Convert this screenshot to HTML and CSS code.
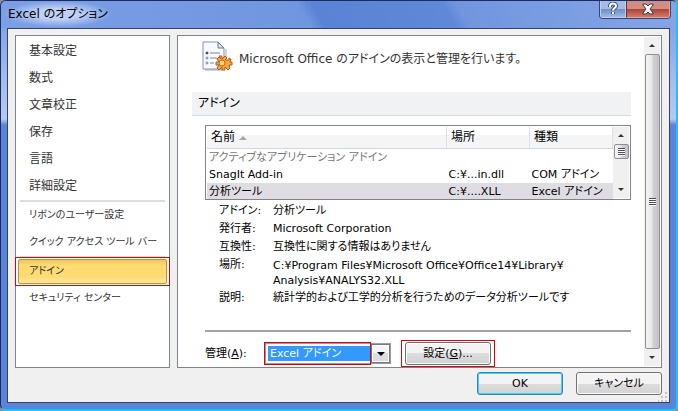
FILE: index.html
```html
<!DOCTYPE html>
<html lang="ja">
<head>
    <meta charset="UTF-8">
    <meta name="viewport" content="width=device-width, initial-scale=1.0">
    <title>Excel のオプション</title>
    <link rel="stylesheet" href="styles.css">
</head>
<body>
    <div class="window">
        <header class="titlebar">
            <h1 class="title">Excel のオプション</h1>
            <div class="caption-buttons">
                <button type="button" class="caption help" aria-label="ヘルプ">
                    <svg width="12" height="14" viewBox="0 0 12 14">
                        <path d="M3 5V4a3 2.500 0 0 1 6 0c0 2-3 2-3 4.500M6 10v2" fill="none" stroke="#3b4a75" stroke-width="4"/>
                        <path d="M3 5V4a3 2.500 0 0 1 6 0c0 2-3 2-3 4.500M6 10v2" fill="none" stroke="#ffffff" stroke-width="2"/>
                    </svg>
                </button>
                <button type="button" class="caption close" aria-label="閉じる">
                    <svg width="14" height="12" viewBox="0 0 14 12">
                        <path d="M2 1h3l2 2 2-2h3v1L9 6l3 4v1H9L7 9l-2 2H2v-1l3-4-3-4z" fill="#ffffff" stroke="#4a3550"/>
                    </svg>
                </button>
            </div>
        </header>

        <div class="client">
            <div class="panels">
                <!-- カテゴリ一覧 -->
                <nav class="sidebar">
                    <div class="main-items">
                        <a class="item" href="#">基本設定</a>
                        <a class="item" href="#">数式</a>
                        <a class="item" href="#">文章校正</a>
                        <a class="item" href="#">保存</a>
                        <a class="item" href="#">言語</a>
                        <a class="item" href="#">詳細設定</a>
                    </div>
                    <div class="separator"></div>
                    <a class="item" href="#">リボンのユーザー設定</a>
                    <a class="item" href="#">クイック アクセス ツール バー</a>
                    <div class="separator"></div>
                    <div class="selected marked"><a class="item active" href="#">アドイン</a></div>
                    <a class="item" href="#">セキュリティ センター</a>
                </nav>

                <main class="content">
                    <div class="page">
                        <div class="intro">
                            <svg width="32" height="32" viewBox="0 0 32 32">
                                <path d="M3 29h17M24 8v10" stroke="#d4d4d8" stroke-width="2"/>
                                <path d="M1 1h15l6 6v21H1z" fill="#f7faff" stroke="#8294b5"/>
                                <path d="M16 1v6h6z" fill="#dbe6f5" stroke="#6d7890"/>
                                <path d="M8 12h10M8 17h7M8 22h4" stroke="#7e879b"/>
                                <circle cx="5" cy="12" r="1" fill="#444444" stroke="#444444"/>
                                <circle cx="5" cy="17" r="1" fill="#ffffff" stroke="#5f80c0"/>
                                <circle cx="5" cy="22" r="1" fill="#ffffff" stroke="#5f80c0"/>
                                <path d="M17 15h3v3l3-3 2 2-2 2h4v-2l2 1-1 3h2v3h-3l1 3-2 2-3-3v3h-3v-3l-3 3-2-2 2-3h-3v-3h3l-2-3 2-2 2 2z" fill="#f5a63c" stroke="#b85b1d" stroke-linejoin="round"/>
                                <circle cx="20" cy="22" r="3" fill="#ffd877" stroke="#c16a20"/>
                            </svg>
                            <p class="intro-text">Microsoft Office のアドインの表示と管理を行います。</p>
                        </div>

                        <h2 class="section-title">アドイン</h2>

                        <div class="section">
                            <div class="list">
                                <table class="addins">
                                    <thead>
                                        <tr><th class="name">名前 <span class="sort"></span></th><th class="place">場所</th><th class="type">種類</th></tr>
                                    </thead>
                                    <tbody>
                                        <tr class="group"><td colspan="3">アクティブなアプリケーション アドイン</td></tr>
                                        <tr><td>SnagIt Add-in</td><td>C:¥...in.dll</td><td>COM アドイン</td></tr>
                                        <tr class="current"><td>分析ツール</td><td>C:¥....XLL</td><td>Excel アドイン</td></tr>
                                    </tbody>
                                </table>
                                <div class="scrollbar small">
                                    <span class="arrow up"></span>
                                    <span class="thumb"><span class="grip"></span></span>
                                    <span class="arrow down"></span>
                                </div>
                            </div>

                            <dl class="details">
                                <dt>アドイン:</dt><dd>分析ツール</dd>
                                <dt>発行者:</dt><dd>Microsoft Corporation</dd>
                                <dt>互換性:</dt><dd>互換性に関する情報はありません</dd>
                                <dt>場所:</dt><dd class="path">C:¥Program Files¥Microsoft Office¥Office14¥Library¥<br>Analysis¥ANALYS32.XLL</dd>
                                <dt>説明:</dt><dd>統計学的および工学的分析を行うためのデータ分析ツールです</dd>
                            </dl>

                            <div class="manage">
                                <label for="manage">管理(<u>A</u>):</label>
                                <div class="combo">
                                    <select id="manage">
                                        <option>Excel アドイン</option>
                                    </select>
                                    <span class="drop"></span>
                                </div>
                                <div class="go marked"><button type="button" class="button">設定(<u>G</u>)...</button></div>
                            </div>
                        </div>
                    </div>
                    <div class="scrollbar">
                        <span class="arrow up"></span>
                        <span class="thumb"><span class="grip"></span></span>
                        <span class="arrow down"></span>
                    </div>
                </main>
            </div>

            <footer class="footer">
                <button type="button" class="button default">OK</button>
                <button type="button" class="button">キャンセル</button>
                <svg class="resize" width="10" height="10" viewBox="0 0 10 10">
                    <path d="M7 0h2v2h-2zM7 4h2v2h-2zM7 8h2v2h-2zM3 4h2v2h-2zM3 8h2v2h-2zM0 8h1v2h-1z" fill="#c2c2c8"/>
                </svg>
            </footer>
        </div>
    </div>
</body>
</html>
```

FILE: styles.css
```css
* {
    box-sizing: border-box;
}
body {
    margin: 0;
    background: #8b8f9c;
    color: #000000;
    font-family: "DejaVu Sans", "Noto Sans CJK JP", sans-serif;
    font-size: 11px;
    line-height: 18px;
    font-feature-settings: "palt";
}
h1, h2, p, dl, dd {
    margin: 0;
    font-weight: normal;
}
button, select {
    font: inherit;
    font-feature-settings: inherit;
    color: inherit;
}

/* ウィンドウ枠 */
.window {
    display: flex;
    flex-direction: column;
    min-height: 100vh;
    padding: 0 6px 6px;
    border: 1px solid #1c2c5c;
    border-right: 2px solid #16c6f4;
    border-bottom: 2px solid #16c6f4;
    border-radius: 6px;
    background: linear-gradient(#7398e2 0, #a4bdec 80px, #b5caf0 118px, #5b84d8 124px, #5b84d8 100%);
}
.titlebar {
    display: flex;
    justify-content: space-between;
    align-items: flex-start;
    height: 27px;
    margin: 0 -6px;
    padding: 0 5px 0 3px;
    border-radius: 5px 5px 0 0;
    background: linear-gradient(60deg, #7c9fe5 0%, #7096e0 45%, #5b83d5 47%, #5f88d8 66%, #7196df 68%, #86a5e5 100%);
}
.title {
    padding: 4px;
    border-radius: 8px;
    background: radial-gradient(closest-side, #bfd1f5 40%, transparent);
    font-size: 12px;
}
.caption-buttons {
    display: flex;
    border: 1px solid #35457c;
    border-top: 0;
    border-radius: 0 0 4px 4px;
    overflow: hidden;
}
.caption {
    display: flex;
    align-items: center;
    justify-content: center;
    height: 17px;
    padding: 0;
    border: 1px solid #c0cdec;
    border-top: 0;
}
.help {
    width: 26px;
    background: linear-gradient(#a6bbe3 50%, #6f8cc4 50%, #9bb8e6);
}
.close {
    width: 44px;
    border-color: #e0a79e;
    border-left: 1px solid #6d2c38;
    background: linear-gradient(#cf8d84 50%, #ad4034 50%, #d07a66);
}

.client {
    display: flex;
    flex: 1;
    flex-direction: column;
    padding: 6px 7px 7px;
    border: 1px solid #34406c;
    background: #f0f0f0;
}
.panels {
    display: flex;
    flex: 1;
    gap: 7px;
}

/* サイドメニュー */
.sidebar {
    flex: 0 0 155px;
    min-width: 0;
    padding-top: 2px;
    border: 1px solid #7f838f;
    background: #ffffff;
    font-size: 10px;
}
.main-items {
    font-size: 12px;
}
.item {
    display: block;
    padding: 4px 13px 5px;
    color: #333333;
    text-decoration: none;
    white-space: nowrap;
}
.separator {
    height: 2px;
    margin: 0 4px;
    background: #dcdde1;
}
.marked {
    outline: 1px solid #e00000;
}
.selected {
    padding: 1px 2px;
}
.active {
    padding: 2px 10px 3px;
    border: 1px solid #bd9139;
    border-radius: 2px;
    background: linear-gradient(#f5c45e, #ffdb72 25%, #ffdb72 70%, #ffe89a);
}

/* 右側の内容 */
.content {
    display: flex;
    flex: 1;
    min-width: 0;
    padding: 1px;
    border: 1px solid #7f838f;
    background: #ffffff;
}
.page {
    flex: 1;
    min-width: 0;
    padding: 4px 13px 0;
}
.intro {
    display: flex;
    gap: 5px;
    padding-left: 10px;
}
.intro-text {
    padding-top: 9px;
    color: #333333;
    font-size: 12px;
}
.section-title {
    margin-top: 19px;
    padding: 2px 6px 3px;
    border-bottom: 1px solid #d9dbdf;
    background: #f1f2f4;
    font-size: 12px;
}
.section {
    padding: 9px 0 0 13px;
}
.list {
    display: flex;
    height: 75px;
    padding: 1px;
    border: 1px solid #7f838f;
    overflow: hidden;
}
.addins {
    flex: 1;
    border-collapse: collapse;
    table-layout: fixed;
    height: 72px;
}
.addins th {
    height: 21px;
    padding: 0 4px;
    border-right: 1px solid #dcdfe4;
    border-bottom: 1px solid #d5d5d5;
    background: linear-gradient(#ffffff 40%, #f3f5f7 40%);
    font-size: 12px;
    font-weight: normal;
    line-height: 18px;
    text-align: left;
}
.addins td {
    height: 17px;
    padding: 0 2px;
    line-height: 17px;
    white-space: nowrap;
}
.place, .type {
    width: 83px;
}
.group {
    color: #777777;
}
.current {
    background: #dfdde3;
}
.sort {
    display: inline-block;
    vertical-align: middle;
    border: 4px solid transparent;
    border-top: 0;
    border-bottom-color: #a5a9ae;
}

/* スクロールバー */
.scrollbar {
    display: flex;
    flex: 0 0 16px;
    flex-direction: column;
    align-items: center;
    background: #f0f0f1;
}
.arrow {
    display: flex;
    align-items: center;
    justify-content: center;
    height: 17px;
}
.arrow::before {
    content: "";
    border: 3px solid transparent;
}
.up::before {
    border-top: 0;
    border-bottom-color: #333333;
}
.down::before {
    border-bottom: 0;
    border-top-color: #333333;
}
.thumb {
    display: flex;
    flex: 1;
    align-items: center;
    justify-content: center;
    width: 15px;
    border: 1px solid #8e9095;
    border-radius: 2px;
    background: linear-gradient(90deg, #f5f5f5, #e7e7e8 45%, #cfd0d2 55%, #c2c3c7);
}
.grip {
    width: 7px;
    height: 8px;
    background: repeating-linear-gradient(#4c4f58 0, #4c4f58 1px, #ffffff 1px, #ffffff 2px);
}
.small .thumb {
    flex: 0 0 15px;
}
.small .down {
    margin-top: auto;
}

.details {
    display: grid;
    grid-template-columns: 54px 1fr;
    padding: 2px 0 0 14px;
}
.path {
    padding: 2px 0 1px;
    line-height: 15px;
}
.manage {
    display: flex;
    align-items: center;
    margin-top: 23px;
    padding-top: 9px;
    border-top: 2px solid #a0a2a7;
}
.manage label {
    width: 59px;
}
.combo {
    position: relative;
    width: 128px;
    height: 23px;
    padding: 1px;
}
.combo::after {
    content: "";
    position: absolute;
    inset: 0 21px 0 0;
    border: 1px solid #e00000;
    pointer-events: none;
}
.combo select {
    display: block;
    width: 100%;
    height: 21px;
    padding: 0 24px 0 4px;
    border: 1px solid #9a9ca0;
    border-radius: 0;
    outline: 0;
    appearance: none;
    background: #3399ff;
    box-shadow: inset 0 0 0 2px #ffffff;
    color: #ffffff;
}
.drop {
    position: absolute;
    top: 2px;
    right: 2px;
    width: 19px;
    height: 19px;
    border: 1px solid #77797e;
    background: linear-gradient(#f4f4f4 50%, #dddddd 50%);
    box-shadow: inset 0 0 0 1px #ffffff;
    pointer-events: none;
}
.drop::before {
    content: "";
    position: absolute;
    top: 7px;
    left: 5px;
    border: 4px solid transparent;
    border-bottom: 0;
    border-top-color: #000000;
}
.go {
    margin-left: 10px;
    padding: 1px 3px;
}
.button {
    width: 86px;
    height: 23px;
    padding: 0;
    border: 1px solid #707070;
    border-radius: 3px;
    background: linear-gradient(#f3f3f3 50%, #dddddd 50%, #d2d2d2);
    box-shadow: inset 0 0 0 1px #fbfbfb;
    line-height: 18px;
}
.go .button {
    display: block;
}

/* 下部のボタン */
.footer {
    position: relative;
    display: flex;
    justify-content: flex-end;
    gap: 13px;
    padding-top: 4px;
}
.default {
    border-color: #3c7fb1;
    box-shadow: inset 0 0 0 1px #42d1f8;
}
.resize {
    position: absolute;
    right: -6px;
    bottom: -7px;
}
```
